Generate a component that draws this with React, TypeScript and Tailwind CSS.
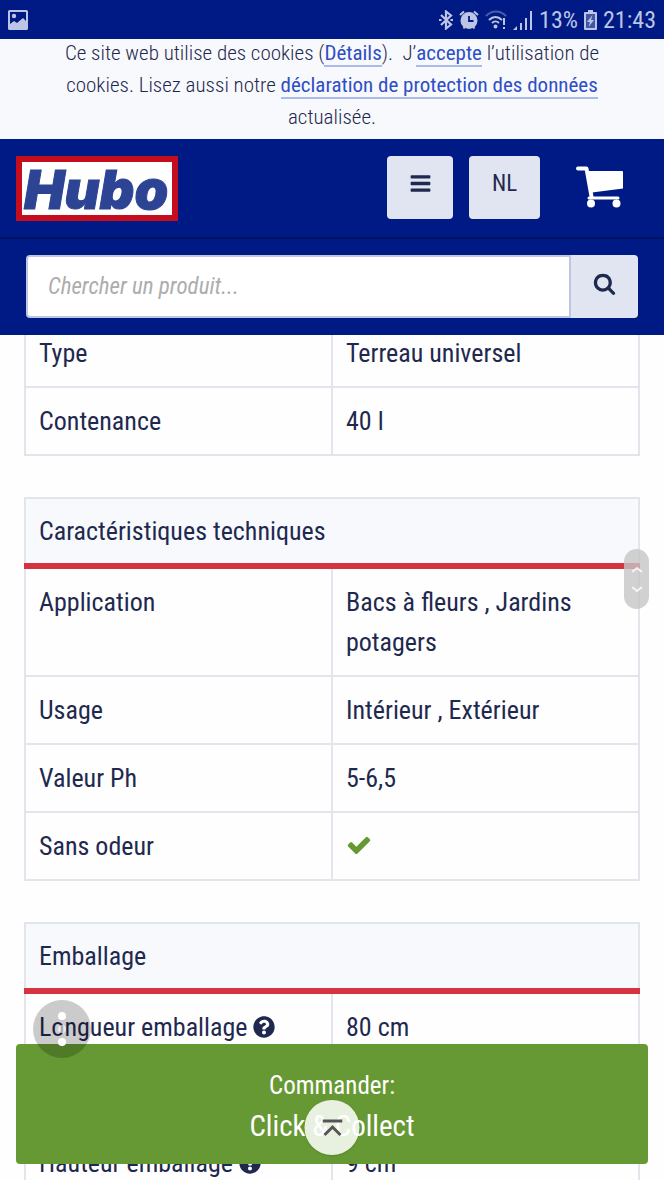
import React from 'react';
import { FaQuestionCircle } from 'react-icons/fa';

type Row = { label: string; value: React.ReactNode; help?: boolean };

// --- Icons ---

const MenuIcon = () => (
    <svg viewBox="0 0 1792 1792" className="w-[23px] h-[23px]" fill="currentColor">
        <path d="M1664 1344v128q0 26-19 45t-45 19H192q-26 0-45-19t-19-45v-128q0-26 19-45t45-19h1408q26 0 45 19t19 45zm0-512v128q0 26-19 45t-45 19H192q-26 0-45-19t-19-45V832q0-26 19-45t45-19h1408q26 0 45 19t19 45zm0-512v128q0 26-19 45t-45 19H192q-26 0-45-19t-19-45V320q0-26 19-45t45-19h1408q26 0 45 19t19 45z" />
    </svg>
);

const SearchIcon = () => (
    <svg viewBox="0 0 1792 1792" className="w-[23px] h-[23px]" fill="currentColor">
        <path d="M1216 832q0-185-131.500-316.500t-316.500-131.500-316.500 131.500-131.500 316.500 131.500 316.500 316.500 131.500 316.500-131.500 131.500-316.500zm512 832q0 52-38 90t-90 38q-54 0-90-38l-343-342q-179 124-399 124-143 0-273.500-55.500t-225-150-150-225-55.500-273.500 55.500-273.500 150-225 225-150 273.500-55.500 273.500 55.500 225 150 150 225 55.500 273.500q0 220-124 399l343 343q37 37 37 90z" />
    </svg>
);

const CheckIcon = () => (
    <svg viewBox="0 0 1792 1792" role="img" aria-label="Oui" className="inline mb-[6px] w-[26px] h-[26px] text-[#669933]" fill="currentColor">
        <path d="M1671 566q0 40-28 68l-724 724-136 136q-28 28-68 28t-68-28l-136-136-362-362q-28-28-28-68t28-68l136-136q28-28 68-28t68 28l294 295 656-657q28-28 68-28t68 28l136 136q28 28 28 68z" />
    </svg>
);

const CartIcon = () => (
    <svg viewBox="0 0 48 44" className="w-12 h-11" fill="#fff">
        <path d="M2 4.500h8.500l5 28" fill="none" stroke="#fff" strokeWidth="4" strokeLinecap="round" strokeLinejoin="round" />
        <path d="M12 7h34a1 1 0 0 1 1 1v16.500L16 28.500z" />
        <path d="M13 34h29" stroke="#fff" strokeWidth="3" strokeLinecap="round" />
        <circle cx="15" cy="39.500" r="4" />
        <circle cx="40.500" cy="39.500" r="4" />
    </svg>
);

const general: Row[] = [
    { label: 'Type', value: 'Terreau universel' },
    { label: 'Contenance', value: '40 l' },
];

const technical: Row[] = [
    { label: 'Application', value: 'Bacs à fleurs , Jardins potagers' },
    { label: 'Usage', value: 'Intérieur , Extérieur' },
    { label: 'Valeur Ph', value: '5-6,5' },
    { label: 'Sans odeur', value: <CheckIcon /> },
];

const packaging: Row[] = [
    { label: 'Longueur emballage', value: '80 cm', help: true },
    { label: 'Largeur emballage', value: '50 cm', help: true },
    { label: 'Hauteur emballage', value: '9 cm', help: true },
];

// --- Shared Components ---

const SpecTable = ({ title, rows }: { title?: string; rows: Row[] }) => (
    <table className="w-full table-fixed border-collapse text-left text-[26px] leading-10">
        {title && (
            <thead>
                <tr>
                    <th colSpan={2} className="border-2 border-b-6 border-[#e2e5ec] border-b-[#d63341] bg-[#f7f9fd] px-[13px] py-3 font-normal">
                        {title}
                    </th>
                </tr>
            </thead>
        )}
        <tbody>
            {rows.map((row) => (
                <tr key={row.label}>
                    <th scope="row" className="border-2 border-[#e2e5ec] px-[13px] py-[13px] align-top font-normal">
                        {row.label}
                        {row.help && <FaQuestionCircle className="inline ml-[6px] mb-1 w-[22px] h-[22px]" />}
                    </th>
                    <td className="border-2 border-[#e2e5ec] px-[13px] py-[13px] align-top">{row.value}</td>
                </tr>
            ))}
        </tbody>
    </table>
);

const CookieLink = ({ children }: { children: React.ReactNode }) => (
    <a href="#" className="border-b-2 border-[#aab9ee] font-normal text-[#2f4fc4]">{children}</a>
);

const StatusBar = () => (
    <div className="relative z-10 flex items-center justify-between bg-[#001a85] h-[39px] px-2 text-2xl text-[#bcc5e4]">
        <svg viewBox="0 0 20 20" className="w-5 h-5" fill="currentColor">
            <path fillRule="evenodd" d="M1.500 0h17A1.500 1.500 0 0 1 20 1.500v17a1.500 1.500 0 0 1-1.500 1.500h-17A1.500 1.500 0 0 1 0 18.500v-17A1.500 1.500 0 0 1 1.500 0zM2 2v12l4-3 3 2 6-5 3 3V2z" />
            <circle cx="6" cy="6" r="2.200" />
        </svg>
        <div className="flex items-center gap-[6px]">
            <svg viewBox="0 0 14 20" className="w-[14px] h-5" fill="none" stroke="currentColor" strokeWidth="2.200">
                <path d="M2 5l10 9.500-5 4V1.500l5 4L2 15" />
                <path d="M0 10h2.500M11.500 10H14" />
            </svg>
            <svg viewBox="0 0 20 20" className="w-5 h-5">
                <circle cx="10" cy="10.500" r="8.500" fill="currentColor" />
                <path d="M1 5l4-3.500M19 5l-4-3.500M4.500 18.500l1.500-2M15.500 18.500l-1.500-2" stroke="currentColor" strokeWidth="2" />
                <path d="M10 6v5h4.500" fill="none" stroke="#001a85" strokeWidth="1.800" />
            </svg>
            <svg viewBox="0 0 22 20" className="w-[22px] h-5" fill="none" stroke="currentColor" strokeWidth="2">
                <path d="M1 6c6-6 14-6 20 0" opacity=".4" />
                <path d="M4 10c4-4 9-4 13 0M7 13c2-2 5-2 7 0" />
                <path d="M19 8v7M19 17v2" />
                <circle cx="10.500" cy="16.500" r="1" />
            </svg>
            <svg viewBox="0 0 20 20" className="w-5 h-5" fill="currentColor">
                <path d="M0 20l4-4v4zM7 13h2v7H7zM12 8h2v12h-2zM17 1h2v19h-2z" />
            </svg>
            <span>13%</span>
            <svg viewBox="0 0 13 20" className="w-[13px] h-5" fill="currentColor">
                <path d="M4 0h5v2h3a1 1 0 0 1 1 1v16a1 1 0 0 1-1 1H1a1 1 0 0 1-1-1V3a1 1 0 0 1 1-1h3z" />
                <path fill="#001a85" opacity=".65" d="M2 4h9v14H2z" />
                <path d="M8.500 5L3 12h3l-1.500 5L10 10H7z" />
            </svg>
            <span>21:43</span>
        </div>
    </div>
);

const App = () => (
    <div className="relative h-screen overflow-hidden bg-[#fefefe] font-['Roboto_Condensed','Roboto',sans-serif] text-[#1f294f]">
        <header className="relative z-10">
            <StatusBar />
            <p className="-mt-[2px] bg-[#f8f9fd] px-14 pb-[6px] text-center text-[21px] leading-8 font-light">
                Ce site web utilise des cookies (<CookieLink>Détails</CookieLink>).&nbsp; J’<CookieLink>accepte</CookieLink> l’utilisation de cookies. Lisez aussi notre <CookieLink>déclaration de protection des données</CookieLink> actualisée.
            </p>

            <div className="flex items-start bg-[#001a85] border-b-2 border-[#001260] px-4 pt-[17px] pb-4">
                <a href="#" aria-label="Hubo">
                    <svg viewBox="0 0 162 65" className="w-[162px] h-[65px] overflow-visible">
                        <rect width="162" height="65" fill="#c50d1e" />
                        <rect x="6" y="6" width="150" height="53" fill="#fff" />
                        <text x="8" y="53" fill="#2d4494" stroke="#2d4494" strokeWidth="1" fontFamily="Inter" fontWeight="900" fontStyle="italic" fontSize="54">Hubo</text>
                    </svg>
                </a>
                <div className="flex gap-4 ml-auto">
                    <button aria-label="Menu" className="flex justify-center w-[66px] h-[63px] rounded-sm bg-[#e1e5f2] pt-4">
                        <MenuIcon />
                    </button>
                    <button className="flex justify-center w-[71px] h-[63px] rounded-sm bg-[#e1e5f2] pt-3 text-[23px] leading-8">NL</button>
                </div>
                <a href="#" aria-label="Panier" className="ml-9 mr-6 mt-2">
                    <CartIcon />
                </a>
            </div>

            <form className="flex bg-[#001a85] px-[26px] pt-4 pb-[17px]">
                <input
                    type="search"
                    aria-label="Chercher un produit"
                    placeholder="Chercher un produit..."
                    className="flex-1 min-w-0 h-[63px] rounded-l-sm border-2 border-[#c0c6df] bg-white px-5 text-[23px] italic placeholder:text-[#adadad]"
                />
                <button type="button" aria-label="Chercher" className="flex justify-center w-[67px] rounded-r-sm bg-[#e1e5f2] pt-[17px]">
                    <SearchIcon />
                </button>
            </form>
        </header>

        <main className="-mt-[17px] flex flex-col gap-[41px] px-6">
            <SpecTable rows={general} />
            <SpecTable title="Caractéristiques techniques" rows={technical} />
            <SpecTable title="Emballage" rows={packaging} />
        </main>

        <button className="absolute inset-x-4 bottom-4 h-[120px] rounded-sm bg-[#669933] pt-1 text-[25px] leading-10 text-white">
            <span className="block">Commander:</span>
            <span className="block text-[29px]">Click &amp; Collect</span>
        </button>

        {/* Floating controls */}
        <button aria-label="Plus d’options" className="absolute left-[33px] bottom-[122px] flex flex-col items-center justify-center gap-[5px] w-[58px] h-[58px] rounded-full bg-black/20">
            <span className="w-2 h-2 rounded-full bg-white" />
            <span className="w-2 h-2 rounded-full bg-white/60" />
            <span className="w-2 h-2 rounded-full bg-white" />
        </button>
        <button aria-label="Défiler" className="absolute right-[15px] top-[549px] flex items-center justify-center w-[25px] h-[60px] rounded-full bg-[#c5c5c5]/80">
            <svg viewBox="0 0 12 28" className="w-3 h-7" fill="none" stroke="#fff" strokeWidth="2" opacity=".8">
                <path d="M1 7l5-4 5 4M1 22l5 4 5-4" />
            </svg>
        </button>
        <button aria-label="Haut de page" className="absolute left-1/2 -translate-x-1/2 bottom-[25px] flex items-center justify-center w-[55px] h-[55px] rounded-full bg-white/85 shadow">
            <svg viewBox="0 0 20 18" className="w-5 h-[18px]" fill="none" stroke="#555" strokeWidth="3">
                <path d="M0 2h20M2 16l8-8 8 8" />
            </svg>
        </button>
    </div>
);

export default App;
